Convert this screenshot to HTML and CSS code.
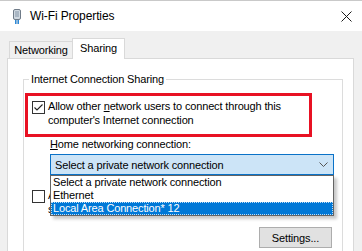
FILE: index.html
```html
<!DOCTYPE html>
<html>
<head>
<meta charset="utf-8">
<link rel="stylesheet" href="styles.css">
</head>
<body>
<div class="window">
  <div class="titlebar">
    <svg class="app-icon" width="8" height="15" viewBox="0 0 8 15">
      <rect x="0.5" y="0.5" width="7" height="10" rx="1.5" fill="#cfd8e0" stroke="#6f7b88"/>
      <rect x="2" y="2" width="4" height="6" fill="#a9b6c3"/>
      <line x1="2.5" y1="11" x2="2.5" y2="15" stroke="#2b8ad8"/>
      <line x1="4" y1="11" x2="4" y2="15" stroke="#1c6fb8"/>
      <line x1="5.5" y1="11" x2="5.5" y2="15" stroke="#2b8ad8"/>
    </svg>
    <span class="title">Wi-Fi Properties</span>
    <svg class="close" width="11" height="11" viewBox="0 0 11 11">
      <path d="M0.5 0.5 L10.5 10.5 M10.5 0.5 L0.5 10.5" stroke="#1a1a1a" stroke-width="1" fill="none"/>
    </svg>
  </div>
  <div class="tabs">
    <div class="tab">Networking</div>
    <div class="tab active">Sharing</div>
  </div>
  <div class="panel">
    <fieldset class="group">
      <legend>Internet Connection Sharing</legend>
      <div class="highlight">
        <div class="check-row">
          <span class="checkbox">
            <svg width="11" height="11" viewBox="0 0 11 11"><path d="M1.5 5.5 L4 8 L9.5 2.5" stroke="#222" stroke-width="1.1" fill="none"/></svg>
          </span>
          <span class="label-text">Allow other <u>n</u>etwork users to connect through this<br>computer's Internet connection</span>
        </div>
      </div>
      <div class="field-label"><u>H</u>ome networking connection:</div>
      <div class="combo-wrap">
        <div class="combo">
          <span>Select a private network connection</span>
          <svg class="chevron" width="9" height="5" viewBox="0 0 9 5"><path d="M0.5 0.5 L4.5 4.5 L8.5 0.5" stroke="#555" fill="none"/></svg>
        </div>
        <ul class="dropdown">
          <li>Select a private network connection</li>
          <li>Ethernet</li>
          <li class="selected">Local Area Connection* 12</li>
        </ul>
      </div>
      <div class="check-row second">
        <span class="checkbox"></span>
        <span class="label-text">Allow other network users to control or disable the<br>shared Internet connection</span>
      </div>
      <div class="actions">
        <button class="btn">Settin<u>g</u>s...</button>
      </div>
    </fieldset>
  </div>
</div>
</body>
</html>
```
FILE: styles.css
```css
html, body {
  margin: 0;
  padding: 0;
}
body {
  width: 362px;
  height: 251px;
  overflow: hidden;
  background: #f0f0f0;
  font-family: "Liberation Sans", Arial, sans-serif;
  font-size: 11px;
  letter-spacing: -0.15px;
  color: #000;
}
.titlebar {
  height: 30px;
  border-top: 1px solid #c9c9c9;
  background: #fff;
  display: flex;
  align-items: center;
  padding: 0 10px 0 13px;
}
.app-icon {
  flex: none;
}
.title {
  margin-left: 9px;
  font-size: 12px;
  letter-spacing: -0.1px;
}
.close {
  margin-left: auto;
}
.tabs {
  height: 27px;
  display: flex;
  align-items: flex-end;
  padding-left: 9px;
}
.tab {
  box-sizing: border-box;
  height: 17px;
  line-height: 16px;
  width: 64px;
  text-align: center;
  border: 1px solid #d9d9d9;
  border-bottom: none;
  background: #f0f0f0;
}
.tab.active {
  width: 53px;
  height: 21px;
  line-height: 19px;
  margin-left: -1px;
  margin-bottom: -1px;
  background: #fff;
  position: relative;
  z-index: 1;
}
.panel {
  margin-left: 7px;
  width: 345px;
  height: 192px;
  overflow: hidden;
  border: 1px solid #d9d9d9;
  border-bottom: none;
  background: #fff;
}
.group {
  margin: 13px 10px 0 15px;
  padding: 0 0 10px 0;
  border: 1px solid #dcdcdc;
  min-width: 0;
}
.group legend {
  padding: 0 2px;
  margin-left: 5px;
  line-height: 14px;
}
.highlight {
  margin: 7px 0 0 1px;
  width: 273px;
  border: 3px solid #e81123;
  padding: 3px 4px 7px;
}
.check-row {
  display: flex;
  gap: 3px;
  line-height: 14px;
}
.checkbox {
  flex: none;
  width: 11px;
  height: 11px;
  margin-top: 2px;
  border: 1px solid #333;
  background: #fff;
  display: flex;
}
.field-label {
  margin-left: 26px;
  line-height: 14px;
}
.combo-wrap {
  position: relative;
  margin: 3px 0 0 26px;
  width: 284px;
}
.combo {
  box-sizing: border-box;
  height: 21px;
  border: 1px solid #0a72c8;
  background: #cce4f7;
  display: flex;
  align-items: center;
  padding: 0 5px 0 4px;
}
.chevron {
  margin-left: auto;
}
.dropdown {
  position: absolute;
  top: 100%;
  left: 0;
  width: 282px;
  margin: 0;
  padding: 0;
  list-style: none;
  border: 1px solid #646464;
  background: #fff;
  box-shadow: 3px 3px 3px rgba(0, 0, 0, 0.22);
  z-index: 2;
}
.dropdown li {
  line-height: 13px;
  padding-left: 2px;
}
.dropdown li.selected {
  background: #0078d7;
  color: #fff;
  outline: 1px dotted rgba(255, 255, 255, 0.75);
  outline-offset: -1px;
}
.check-row.second {
  margin: 13px 0 0 8px;
}
.actions {
  display: flex;
  justify-content: flex-end;
  margin: 11px 10px 0 0;
}
.btn {
  width: 73px;
  height: 21px;
  padding: 0;
  border: 1px solid #adadad;
  background: #e1e1e1;
  font: inherit;
  letter-spacing: inherit;
  color: #000;
}
```
